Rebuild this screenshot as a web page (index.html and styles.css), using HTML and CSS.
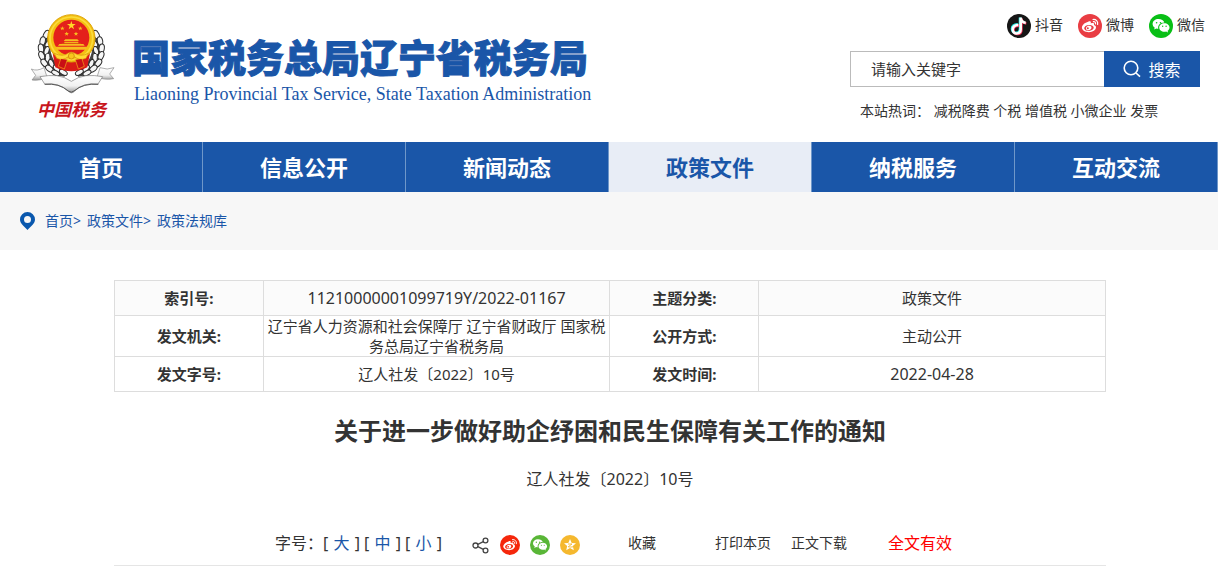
FILE: index.html
```html
<!DOCTYPE html>
<html lang="zh-CN">
<head>
<meta charset="utf-8">
<meta name="viewport" content="width=device-width, initial-scale=1">
<title>关于进一步做好助企纾困和民生保障有关工作的通知</title>
<link rel="stylesheet" href="styles.css">
</head>
<body>
<svg class="defs" width="0" height="0" aria-hidden="true">
  <symbol id="weibo" viewBox="0 0 24 24">
    <path fill="#fff" fill-rule="evenodd" d="M10.200 7.700c1.400-.7 2.700-.5 2.700.8 0 .5-.2.9-.1 1 .3.100 1.300-.5 2.300-.4 1 .1 1.200.900.900 1.600-.1.300 0 .4.300.5 1 .4 1.700 1 1.700 2.100 0 2.700-3.200 4.900-7.100 4.900-4 0-7-2-7-4.700 0-2.300 2.900-4.900 6.300-5.800zM11 10.900c-2.800.2-4.900 1.600-4.800 3.400.1 1.700 2.200 2.800 4.800 2.600 2.700-.2 4.800-1.800 4.700-3.500-.1-1.600-2.200-2.700-4.700-2.500zM10.600 11.700c1.700-.3 3 .6 2.900 2.100-.2 1.500-1.600 2.500-3.100 2.500-1.600 0-2.700-1.100-2.400-2.400.2-1.100 1.200-2 2.600-2.200z"/>
    <circle cx="9.800" cy="14.200" r="1" fill="currentColor"/>
    <path fill="none" stroke="#fff" stroke-width="1.200" stroke-linecap="round" d="M15 5.500c2.900-.4 5.300 1.900 4.600 5M15.400 7.700c1.500-.2 2.400.8 2.100 2.200"/>
  </symbol>
  <symbol id="wechat" viewBox="0 0 24 24">
    <path fill="#fff" d="M9.500 5c-3.300 0-5.900 2.100-5.900 4.900 0 1.500.8 2.800 2.100 3.700l-.5 2 2.200-1.100c.6.2 1.200.2 1.900.2-.8-3.500 2.200-6.300 6-6.200C14.700 6.400 12.500 5 9.500 5z"/>
    <path fill="#fff" d="M15.400 9.200c-2.900 0-5.200 1.900-5.200 4.300s2.300 4.300 5.200 4.300c.6 0 1.200-.1 1.700-.3l1.900 1-.4-1.700c1.200-.8 1.900-2 1.900-3.300 0-2.400-2.300-4.300-5.100-4.300z"/>
    <g fill="currentColor"><circle cx="7.600" cy="8.700" r=".8"/><circle cx="11.500" cy="8.700" r=".8"/><circle cx="13.700" cy="12.300" r=".7"/><circle cx="17.100" cy="12.300" r=".7"/></g>
  </symbol>
</svg>

<header class="header">
  <a class="brand" href="#">
    <svg class="emblem" viewBox="0 0 330 375" role="img" aria-label="中国税务">
      <defs>
        <linearGradient id="silver" x1="0" y1="0" x2="0" y2="1"><stop offset="0" stop-color="#fff"/><stop offset=".6" stop-color="#f1f1f1"/><stop offset="1" stop-color="#999"/></linearGradient>
        <g id="ear">
          <path d="M88 77C60 98 50 132 62 165s38 47 72 50l4-22C106 184 86 150 92 110z" fill="#444"/>
          <g fill="#f6f6f6" stroke="#2c2c2c" stroke-width="3">
            <ellipse cx="79" cy="89" rx="8" ry="14" transform="rotate(28 79 89)"/>
            <ellipse cx="68" cy="108" rx="8" ry="13" transform="rotate(12 68 108)"/>
            <ellipse cx="85" cy="115" rx="7" ry="13" transform="rotate(38 85 115)"/>
            <ellipse cx="63" cy="130" rx="8" ry="13" transform="rotate(-8 63 130)"/>
            <ellipse cx="80" cy="137" rx="7" ry="13" transform="rotate(18 80 137)"/>
            <ellipse cx="65" cy="152" rx="8" ry="13" transform="rotate(-22 65 152)"/>
            <ellipse cx="83" cy="158" rx="7" ry="13" transform="rotate(0 83 158)"/>
            <ellipse cx="73" cy="174" rx="8" ry="13" transform="rotate(-38 73 174)"/>
            <ellipse cx="94" cy="176" rx="7" ry="13" transform="rotate(-20 94 176)"/>
            <ellipse cx="88" cy="191" rx="8" ry="13" transform="rotate(-50 88 191)"/>
            <ellipse cx="110" cy="191" rx="7" ry="13" transform="rotate(-40 110 191)"/>
            <ellipse cx="107" cy="204" rx="7" ry="13" transform="rotate(-62 107 204)"/>
            <ellipse cx="130" cy="202" rx="7" ry="13" transform="rotate(-60 130 202)"/>
          </g>
        </g>
      </defs>
      <use href="#ear"/>
      <use href="#ear" transform="matrix(-1 0 0 1 308 0)"/>
      <path d="M98 145l8 42q48 24 96 0l8-42z" fill="#d91a16"/>
      <circle cx="154" cy="100" r="71" fill="#f4c012" stroke="#dfa60b" stroke-width="3"/>
      <circle cx="154" cy="100" r="64" fill="none" stroke="#fbdc3c" stroke-width="5"/>
      <circle cx="154" cy="98" r="54" fill="#e4201b"/>
      <path fill="#ffd927" d="M154 48l3 9h10l-8 6 3 10-8-6-8 6 3-10-8-6h10z"/>
      <g fill="#f8bd20">
        <path d="M127 64l2 4h5l-4 3 1 5-4-3-4 3 1-5-4-3h5zM181 64l2 4h5l-4 3 1 5-4-3-4 3 1-5-4-3h5zM140 80l2 4h5l-4 3 1 5-4-3-4 3 1-5-4-3h5zM168 80l2 4h5l-4 3 1 5-4-3-4 3 1-5-4-3h5z"/>
        <path d="M136 103h36l5 5h-46zM133 110h42v5h-42zM118 117h72l4 5h-80zM106 125h96l-5 9h-86z"/>
      </g>
      <path d="M125 115h58" stroke="#d7650b" stroke-width="2"/>
      <path d="M103 145q26 12 42-1 9-5 18 0 19 13 42 1l-7 15q-20 8-35-5l-9-3-9 3q-16 13-35 5z" fill="#ffda35" stroke="#d88d0a" stroke-width="2"/>
      <circle cx="154" cy="153" r="9" fill="#f8c61c" stroke="#c97c09" stroke-width="2"/>
      <path d="M122 162l-7 22 18 8 9-28M186 162l7 22-18 8-9-28" fill="#c90f15" stroke="#f4ac1a" stroke-width="2"/>
      <path d="M34 192q16 8 38-4l9 28q-18 12-45 9l11-14zM282 188q-20 8-42 0l-9 28q20 10 50 5l-12-14z" fill="url(#silver)" stroke="#888" stroke-width="2"/>
      <path d="M60 215q26-5 50-3 24 3 44 17 21-14 44-17 26-2 50 3l-14 22q-45-5-70 21-9 11-20 0-28-26-70-21z" fill="url(#silver)" stroke="#777" stroke-width="2"/>
      <path d="M74 238q44-4 71 20 9 7 17 0 28-24 73-20" fill="none" stroke="#555" stroke-width="3"/>
      <text class="emblem-word" x="50" y="332">中国税务</text>
    </svg>
    <span class="brand-names">
      <span class="brand-cn">国家税务总局辽宁省税务局</span>
      <span class="brand-en">Liaoning Provincial Tax Service, State Taxation Administration</span>
    </span>
  </a>
  <div class="tools">
    <nav class="social" aria-label="社交媒体">
      <a href="#"><svg class="social-icon" viewBox="0 0 24 24"><circle cx="12" cy="12" r="12" fill="#161616"/><g fill="none" stroke-width="2.600"><path stroke="#25e9e2" d="M10.600 10.400c-3.400-.2-5.700 1.900-5.600 4.500.1 5.400 7.900 5.200 8-.2V3.600c.5 2.900 2.400 4.300 4.900 4.600"/><path stroke="#fb3159" d="M12 11.600c-3.400-.2-5.700 1.900-5.600 4.500.1 5.400 7.900 5.200 8-.2V4.800c.5 2.900 2.400 4.300 4.900 4.600"/><path stroke="#fff" d="M11.300 11c-3.400-.2-5.700 1.900-5.600 4.500.1 5.400 7.900 5.200 8-.2V3.600c.5 3.300 2.400 4.900 5 5.200"/></g></svg><span>抖音</span></a>
      <a href="#"><svg class="social-icon weibo" viewBox="0 0 24 24"><circle cx="12" cy="12" r="12" fill="currentColor"/><use href="#weibo"/></svg><span>微博</span></a>
      <a href="#"><svg class="social-icon wechat" viewBox="0 0 24 24"><circle cx="12" cy="12" r="12" fill="currentColor"/><use href="#wechat"/></svg><span>微信</span></a>
    </nav>
    <form class="search">
      <input class="search-input" type="text" aria-label="搜索关键字" placeholder="请输入关键字">
      <button class="search-button" type="button"><svg width="18" height="18" viewBox="0 0 18 18" fill="none" stroke="#fff" stroke-width="1.600"><circle cx="8" cy="8" r="6.800"/><path d="M13 13l4 3.600"/></svg>搜索</button>
    </form>
    <div class="hot">本站热词： <a href="#">减税降费</a> <a href="#">个税</a> <a href="#">增值税</a> <a href="#">小微企业</a> <a href="#">发票</a></div>
  </div>
</header>

<nav class="nav" aria-label="主导航">
  <a href="#">首页</a>
  <a href="#">信息公开</a>
  <a href="#">新闻动态</a>
  <a class="active" href="#">政策文件</a>
  <a href="#">纳税服务</a>
  <a href="#">互动交流</a>
</nav>

<nav class="crumbs" aria-label="当前位置">
  <svg width="15" height="18" viewBox="0 0 15 18"><path fill="#0a58ae" fill-rule="evenodd" d="M7.500 0A7.500 7.500 0 0 1 15 7.500c0 4.100-4.500 7.300-7.500 10.500C4.500 14.800 0 11.600 0 7.500A7.500 7.500 0 0 1 7.500 0zm0 4a3.500 3.500 0 1 0 0 7 3.500 3.500 0 0 0 0-7z"/></svg>
  <ol class="trail">
    <li><a href="#">首页</a>&gt;</li>
    <li><a href="#">政策文件</a>&gt;</li>
    <li><a href="#">政策法规库</a></li>
  </ol>
</nav>

<main class="article">
  <table class="meta">
    <colgroup><col class="col-label"><col class="col-value"><col class="col-label"><col class="col-value"></colgroup>
    <tbody>
      <tr class="shaded"><th scope="row">索引号:</th><td class="code">11210000001099719Y/2022-01167</td><th scope="row">主题分类:</th><td>政策文件</td></tr>
      <tr><th scope="row">发文机关:</th><td>辽宁省人力资源和社会保障厅 辽宁省财政厅 国家税务总局辽宁省税务局</td><th scope="row">公开方式:</th><td>主动公开</td></tr>
      <tr><th scope="row">发文字号:</th><td>辽人社发〔2022〕10号</td><th scope="row">发文时间:</th><td class="code">2022-04-28</td></tr>
    </tbody>
  </table>
  <h1 class="title">关于进一步做好助企纾困和民生保障有关工作的通知</h1>
  <p class="doc-no">辽人社发〔2022〕10号</p>
  <div class="actions">
    <div class="font-size">字号：[ <a href="#">大</a> ] [ <a href="#">中</a> ] [ <a href="#">小</a> ]</div>
    <div class="share">
      <svg width="18" height="18" viewBox="0 0 18 18" fill="none" stroke="#444" stroke-width="1.300"><circle cx="3.500" cy="9.500" r="2.500"/><circle cx="13.500" cy="4.500" r="2.400"/><circle cx="13.500" cy="14.500" r="2.400"/><path d="M5.800 8.300l5.500-2.700M5.800 10.700l5.500 2.700"/></svg>
      <a class="share-weibo" href="#" aria-label="微博"><svg width="20" height="20" viewBox="0 0 24 24"><circle cx="12" cy="12" r="12" fill="currentColor"/><use href="#weibo"/></svg></a>
      <a class="share-wechat" href="#" aria-label="微信"><svg width="20" height="20" viewBox="0 0 24 24"><circle cx="12" cy="12" r="12" fill="currentColor"/><use href="#wechat"/></svg></a>
      <a href="#" aria-label="QQ空间"><svg width="20" height="20" viewBox="0 0 20 20"><circle cx="10" cy="10" r="10" fill="#f5b82e"/><path fill="#fff" d="M10 4l1.700 3.900 4.300.4-3.200 2.800 1 4.200L10 13l-3.800 2.300 1-4.200L4 8.300l4.300-.4z"/><path fill="none" stroke="#f5b82e" stroke-width=".9" d="M8 9h4l-3.800 2.800q2.500.5 5 0"/></svg></a>
    </div>
    <a class="favorite" href="#">收藏</a>
    <div class="page-links"><a href="#">打印本页</a><a href="#">正文下载</a></div>
    <strong class="status">全文有效</strong>
  </div>
</main>
</body>
</html>
```
FILE: styles.css
```css
* { box-sizing: border-box; }

body {
  margin: 0;
  background: #fff;
  color: #333;
  font: 14px/20px "Noto Sans", "Noto Sans CJK SC", sans-serif;
}

a { color: inherit; text-decoration: none; }
svg { display: block; flex: none; }
.defs { position: absolute; }

.header {
  display: flex;
  justify-content: space-between;
  align-items: flex-start;
  min-height: 142px;
  padding: 5px 13px 0 20px;
}

.brand { display: flex; color: #1a56a8; }
.emblem { width: 110px; height: 125px; }
.emblem-word {
  fill: #c8161d;
  font: italic bold 52px "Noto Sans CJK SC", sans-serif;
}
.brand-names { display: flex; flex-direction: column; padding: 27px 0 0 2px; }
.brand-cn {
  font: 900 38px/48px "Noto Sans CJK SC", sans-serif;
  white-space: nowrap;
  -webkit-text-stroke: 1px #1a56a8;
}
.brand-en { padding: 2px 0 0 2px; font: 18px/24px "Liberation Serif", serif; white-space: nowrap; }

.tools { display: flex; flex-direction: column; width: 355px; padding-top: 9px; }
.social { display: flex; justify-content: flex-end; gap: 15px; }
.social a { display: flex; align-items: center; gap: 4px; }
.social span { padding-bottom: 2px; }
.social-icon { width: 24px; height: 24px; }
.weibo { color: #e93d43; }
.wechat { color: #09bf16; }

.search { display: flex; height: 36px; margin: 13px 5px 0 0; }
.search-input {
  flex: 1;
  min-width: 0;
  padding: 0 20px;
  border: 1px solid #bbb;
  border-right: 0;
  border-radius: 0;
  outline: 0;
  background: #fff;
  color: #333;
  font: 15px "Noto Sans", "Noto Sans CJK SC", sans-serif;
}
.search-input::placeholder { color: #333; opacity: 1; }
.search-button {
  display: flex;
  align-items: center;
  justify-content: center;
  gap: 7px;
  width: 96px;
  padding: 0;
  border: 0;
  background: #1a56a8;
  color: #fff;
  font: 16px "Noto Sans", "Noto Sans CJK SC", sans-serif;
}
.hot { margin-top: 14px; padding-left: 10px; white-space: nowrap; }

.nav { display: grid; grid-template-columns: repeat(6, 1fr); background: #1a56a8; }
.nav a {
  border-right: 1px solid #6f97c9;
  color: #fff;
  font-size: 22px;
  font-weight: bold;
  line-height: 50px;
  text-align: center;
}
.nav .active { background: #e8edf6; color: #1a56a8; }

.crumbs {
  display: flex;
  align-items: center;
  gap: 10px;
  height: 58px;
  padding-left: 20px;
  background: #f7f7f7;
  color: #1a56a8;
}
.trail { display: flex; gap: 6px; margin: 0; padding: 0; list-style: none; }

.article { padding: 30px 112px 0 114px; }
.meta {
  width: 100%;
  border-collapse: collapse;
  table-layout: fixed;
  font-size: 15px;
  text-align: center;
}
.col-label { width: 15%; }
.col-value { width: 35%; }
.meta th, .meta td { height: 35px; padding: 0 3px; border: 1px solid #ddd; }
.meta .code { font-size: 16px; }
.shaded { background: #fbfbfb; }

.title { margin: 21px 0 0; font-size: 24px; line-height: 36px; text-align: center; }
.doc-no { margin: 20px 0 0; font-size: 16px; line-height: 20px; text-align: center; }

.actions {
  display: flex;
  align-items: center;
  justify-content: center;
  margin-top: 32px;
  padding: 10px 0 10px 7px;
  border-bottom: 1px solid #e5e5e5;
}
.font-size { font-size: 16px; line-height: 24px; white-space: nowrap; }
.font-size a { padding: 0 1px; color: #1a56a8; }
.share { display: flex; align-items: center; gap: 10px; margin-left: 30px; padding-top: 4px; }
.share-weibo { color: #f5270b; }
.share-wechat { color: #59b637; }
.favorite { margin-left: 48px; }
.page-links { display: flex; gap: 20px; margin-left: 59px; }
.status { margin-left: 41px; color: #f00; font-size: 16px; font-weight: normal; }
```
